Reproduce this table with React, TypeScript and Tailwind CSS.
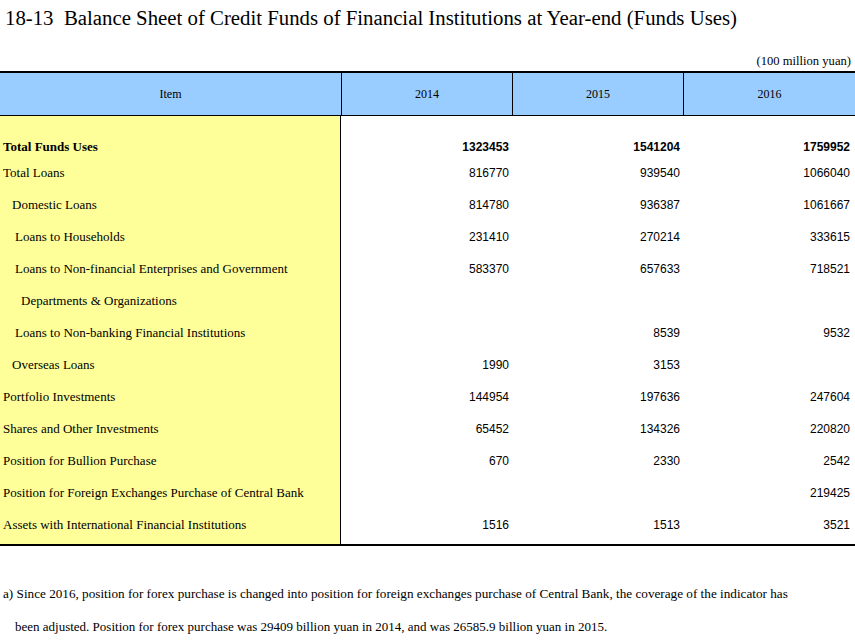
import React from "react";

const serif = { fontFamily: '"Liberation Serif", "Times New Roman", serif' };

type Row = { label: string; indent: number; bold?: boolean; v: [string, string, string]; h: number; pt?: number };

const rows: Row[] = [
  { label: "Total Funds Uses", indent: 3, bold: true, v: ["1323453", "1541204", "1759952"], h: 28, pt: 8 },
  { label: "Total Loans", indent: 3, v: ["816770", "939540", "1066040"], h: 32 },
  { label: "Domestic Loans", indent: 12, v: ["814780", "936387", "1061667"], h: 32 },
  { label: "Loans to Households", indent: 15, v: ["231410", "270214", "333615"], h: 32 },
  { label: "Loans to Non-financial Enterprises and Government", indent: 15, v: ["583370", "657633", "718521"], h: 32 },
  { label: "Departments & Organizations", indent: 21, v: ["", "", ""], h: 32 },
  { label: "Loans to Non-banking Financial Institutions", indent: 15, v: ["", "8539", "9532"], h: 32 },
  { label: "Overseas Loans", indent: 12, v: ["1990", "3153", ""], h: 32 },
  { label: "Portfolio Investments", indent: 3, v: ["144954", "197636", "247604"], h: 32 },
  { label: "Shares and Other Investments", indent: 3, v: ["65452", "134326", "220820"], h: 32 },
  { label: "Position for Bullion Purchase", indent: 3, v: ["670", "2330", "2542"], h: 32 },
  { label: "Position for Foreign Exchanges Purchase of Central Bank", indent: 3, v: ["", "", "219425"], h: 32 },
  { label: "Assets with International Financial Institutions", indent: 3, v: ["1516", "1513", "3521"], h: 32 },
];

export default function App() {
  return (
    <div className="w-[855px] h-[643px] bg-white text-black overflow-hidden" style={serif}>
      <div className="h-[38px] pl-[5px] pt-[6px] text-[20.8px] leading-[24px] whitespace-pre">
        {"18-13  Balance Sheet of Credit Funds of Financial Institutions at Year-end (Funds Uses)"}
      </div>
      <div className="h-[33px] flex items-end justify-end pr-[4px] pb-[3px] text-[12.6px] leading-[14px]">
        (100 million yuan)
      </div>
      <div className="border-t-2 border-b-2 border-black">
        <div className="grid grid-cols-[341px_171px_171px_172px] h-[43px] bg-[#99ccff] border-b border-black text-[12px]">
          <div className="flex items-center justify-center">Item</div>
          <div className="flex items-center justify-center border-l border-black">2014</div>
          <div className="flex items-center justify-center border-l border-black">2015</div>
          <div className="flex items-center justify-center border-l border-black">2016</div>
        </div>
        <div className="grid grid-cols-[341px_514px]">
          <div className="bg-[#ffff99] border-r border-black pt-[13px] pb-[3px]">
            {rows.map((r, i) => (
              <div
                key={i}
                className={`flex items-center text-[13px] leading-[16px] whitespace-nowrap ${r.bold ? "font-bold" : ""}`}
                style={{ height: r.h, paddingTop: r.pt ?? 0, paddingLeft: r.indent }}
              >
                {r.label}
              </div>
            ))}
          </div>
          <div className="pt-[13px] pb-[3px]" style={{ fontFamily: '"Liberation Sans", Arial, sans-serif' }}>
            {rows.map((r, i) => (
              <div
                key={i}
                className={`grid grid-cols-[170px_171px_172px] items-center text-[12px] leading-[16px] ${r.bold ? "font-bold" : ""}`}
                style={{ height: r.h, paddingTop: r.pt ?? 0 }}
              >
                <div className="text-right pr-[2px]">{r.v[0]}</div>
                <div className="text-right pr-[2px]">{r.v[1]}</div>
                <div className="text-right pr-[4px]">{r.v[2]}</div>
              </div>
            ))}
          </div>
        </div>
      </div>
      <div className="pt-[40px] text-[13.2px] leading-[16px] pl-[3px] whitespace-nowrap">
        a) Since 2016, position for forex purchase is changed into position for foreign exchanges purchase of Central Bank, the coverage of the indicator has
      </div>
      <div className="pt-[17px] text-[13px] leading-[16px] pl-[15px] whitespace-nowrap">
        been adjusted. Position for forex purchase was 29409 billion yuan in 2014, and was 26585.9 billion yuan in 2015.
      </div>
    </div>
  );
}
